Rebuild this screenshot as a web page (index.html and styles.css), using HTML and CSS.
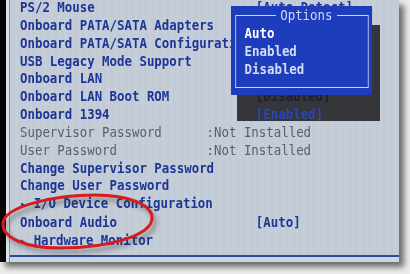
FILE: index.html
```html
<!DOCTYPE html>
<html lang="en">

<head>
  <title>BIOS Setup</title>
  <meta charset="utf-8">
  <link rel="stylesheet" href="styles.css">
</head>

<body>
  <div class="photo">
    <div class="bezel"></div>
    <div class="screen">
      <ul class="menu">
        <li class="row"><span class="label">PS/2 Mouse</span><span>[Auto Detect]</span></li>
        <li class="row"><span class="label">Onboard PATA/SATA Adapters</span></li>
        <li class="row"><span class="label">Onboard PATA/SATA Configuration</span></li>
        <li class="row"><span class="label">USB Legacy Mode Support</span></li>
        <li class="row"><span class="label">Onboard LAN</span></li>
        <li class="row"><span class="label">Onboard LAN Boot ROM</span><span>[Disabled]</span></li>
        <li class="row row-lift"><span class="label">Onboard 1394</span><span class="lit">[Enabled]</span></li>
        <li class="row dim"><span class="label label-short">Supervisor Password</span><span>:Not Installed</span></li>
        <li class="row dim"><span class="label label-short">User Password</span><span>:Not Installed</span></li>
        <li class="row"><span class="label">Change Supervisor Password</span></li>
        <li class="row"><span class="label">Change User Password</span></li>
        <li class="row"><span class="label"><span class="arrow">&#9656;</span> I/O Device Configuration</span></li>
        <li class="row"><span class="label">Onboard Audio</span><span>[Auto]</span></li>
        <li class="row"><span class="label"><span class="arrow">&#9656;</span> Hardware Monitor</span></li>
      </ul>
    </div>

    <div class="shade"></div>
    <div class="options">
      <fieldset class="frame">
        <legend>Options</legend>
        <span class="opt opt-active">Auto</span>
        <span class="opt">Enabled</span>
        <span class="opt">Disabled</span>
      </fieldset>
    </div>

    <svg class="mark" width="399" height="262" viewBox="0 0 399 262">
      <defs>
        <filter id="soft" x="-20%" y="-50%" width="140%" height="200%">
          <feGaussianBlur stdDeviation="2"/>
        </filter>
      </defs>
      <path d="M3 224C3 205 60 195 95 195C130 195 152 205 152 218C152 235 110 248 60 248C25 248 3 238 3 224Z" transform="translate(3 4)" fill="none" stroke="rgba(40,40,40,.35)" stroke-width="4" filter="url(#soft)"/>
      <path d="M3 224C3 205 60 195 95 195C130 195 152 205 152 218C152 235 110 248 60 248C25 248 3 238 3 224Z" fill="none" stroke="#d81c1c" stroke-width="3"/>
    </svg>
  </div>
</body>

</html>
```

FILE: styles.css
```css
html,
body {
  height: 100%;
  padding: 0;
  margin: 0;
}

body {
  background: #ececec;
  color: #1d3596;
  font: bold 14.5px/17.85px "DejaVu Sans Mono", monospace;
}

.photo {
  position: relative;
  display: flex;
  width: 399px;
  height: 262px;
  background: #c3cbd6;
  box-shadow: 5px 5px 6px rgba(0, 0, 0, .55);
  overflow: hidden;
}

.bezel {
  flex: none;
  width: 6px;
  background: #050505;
}

.screen {
  flex: 1;
  padding-left: 11px;
  border-left: 3px solid #dce3ec;
  background: repeating-linear-gradient(90deg, rgba(255, 255, 255, .06) 0 2px, transparent 2px 7px);
  box-shadow: inset 1px 0 #8090b4, inset -1px 0 #e6ecf3, inset 0 -5px #cdd5df, inset 0 -7px #2d4b9e;
}

.menu {
  list-style: none;
  margin: -1px 0 0;
  padding: 0;
  white-space: nowrap;
}

.row {
  display: flex;
  transform: scaleX(.855);
  transform-origin: 0 0;
}

/* this row's value sits on top of the popup shadow */
.row-lift {
  position: relative;
  z-index: 1;
}

.lit {
  color: #2848b8;
}

.label {
  flex: none;
  width: 31.6ch;
}

.label-short {
  width: 25ch;
}

.dim {
  color: #59606d;
  font-weight: normal;
}

.arrow {
  font-size: 12px;
}

/* popup drop shadow, the menu shows faintly through it */
.shade {
  position: absolute;
  left: 237px;
  top: 25px;
  width: 143px;
  height: 96px;
  background: rgba(28, 28, 30, .85);
}

.options {
  position: absolute;
  left: 231px;
  top: 6px;
  width: 164.9px;
  height: 89px;
  box-sizing: border-box;
  padding: 0 3.5px 7px 4.7px;
  background: #1d3dbd;
  transform: scaleX(.855);
  transform-origin: 0 0;
}

.frame {
  height: 100%;
  box-sizing: border-box;
  margin: 0;
  padding: 0 0 0 10.2px;
  border: 1.5px solid #c9d5f5;
}

.frame legend {
  margin: 0 auto;
  padding: 0 5px;
  color: #cfd8f2;
  font-weight: normal;
  line-height: 18px;
}

.opt {
  display: block;
  line-height: 18px;
  color: #d4ddf6;
}

.opt-active {
  color: #fff;
}

.mark {
  position: absolute;
  left: 0;
  top: 0;
  pointer-events: none;
}
```
